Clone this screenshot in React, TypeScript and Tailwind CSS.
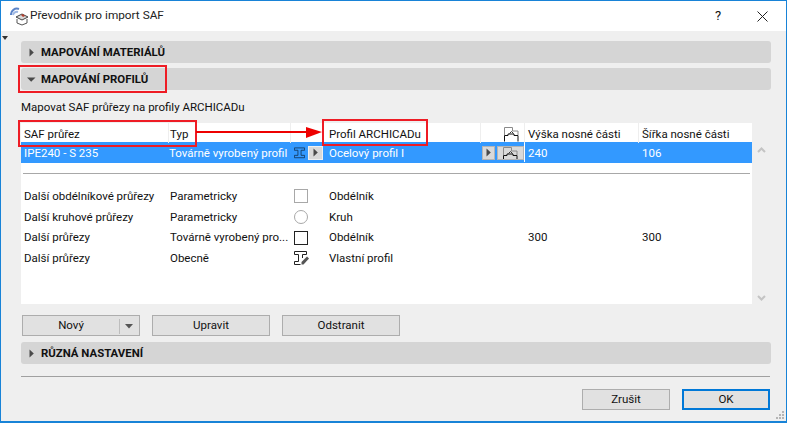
import React from 'react';

const font = { fontFamily: 'Roboto, "Noto Sans", sans-serif' };

const Tri = ({ open = false }: { open?: boolean }) => (
    <svg width="9" height="9" viewBox="0 0 9 9" className="shrink-0">
        {open ? <path d="M0 2.500h8.500L4.200 6.800z" fill="#4a4a4a" /> : <path d="M2.500 0.500L6.800 4.500 2.500 8.500z" fill="#4a4a4a" />}
    </svg>
);

const Section = ({ title, open = false }: { title: string; open?: boolean }) => (
    <div className="h-[22px] rounded-[3px] bg-[#d5d5d5] flex items-center pl-[6px] gap-[5px]">
        <Tri open={open} />
        <span className="pt-[1px] text-[11.4px] font-bold text-[#111]">{title}</span>
    </div>
);

const Btn = ({ label, className }: { label: string; className: string }) => (
    <button className={`h-[21px] pt-[1px] bg-[#e1e1e1] border border-[#adadad] text-[11.5px] text-[#111] flex items-center justify-center ${className}`}>
        {label}
    </button>
);

const ProfileIcon = ({ stroke }: { stroke: string }) => (
    <svg width="14" height="14" viewBox="0 0 14 14" fill="none" stroke={stroke} strokeWidth="1">
        <path d="M.5.5h13v3H9v6.500h4.500v3H.5v-3H5V3.500H.5z" />
    </svg>
);

const LibIcon = ({ clip = false }: { clip?: boolean }) => (
    <svg width="15" height={clip ? 13 : 15} viewBox={clip ? '0 0 15 13' : '0 0 15 15'} fill="none">
        <path d="M.5 8V.5h8v3.500h5.500V8" stroke="#8a8a8a" />
        <path d="M5.500 6.500l2-2 2 2" stroke="#333" />
        <path d="M.5 14.500V8.500h3.500v-1.500h6v1.500h4v6" stroke="#111" />
    </svg>
);

const rowCols = 'grid grid-cols-[147px_122px_33px_157px_44px_114px_114px] items-center';

const rows = [
    { a: 'Další obdélníkové průřezy', b: 'Parametricky', c: 'Obdélník', icon: <div className="w-[14px] h-[14px] border border-[#a8a8a8]" /> },
    { a: 'Další kruhové průřezy', b: 'Parametricky', c: 'Kruh', icon: <div className="w-[14px] h-[14px] border border-[#a8a8a8] rounded-full" /> },
    { a: 'Další průřezy', b: 'Továrně vyrobený pro...', c: 'Obdélník', icon: <div className="w-[14px] h-[14px] border border-[#222]" />, h: '300', w: '300' },
    {
        a: 'Další průřezy',
        b: 'Obecně',
        c: 'Vlastní profil',
        icon: (
            <svg width="16" height="15" viewBox="0 0 16 15" fill="none">
                <path d="M8.500 7V3.500h4v-3H.5v3h4v7h-4v3h6" stroke="#222" />
                <path d="M7.500 13.500V11l5.500-5.500 2 2-5.500 6z" fill="#555" />
            </svg>
        ),
    },
];

export default function App() {
    return (
        <div className="relative w-[787px] h-[423px] overflow-hidden bg-[#efefef] text-[11.5px] text-[#111] border-x-[1px] border-t-[1px] border-b-[2px] border-[#1883d7]" style={font}>
            {/* title bar */}
            <div className="h-[30px] bg-white flex items-center pl-[9px]">
                <svg width="20" height="20" viewBox="0 0 20 20" fill="none">
                    <path d="M1 9a6 6 0 0 1 8-6" stroke="#5b84c8" strokeWidth="2" />
                    <path d="M3 9a4 4 0 0 1 5-3" stroke="#9db7e2" strokeWidth="2" />
                    <path d="M6 11l6-3 6 3-6 3z" fill="#d9d9d9" stroke="#444" />
                    <path d="M7 13v4l5 2 5-2v-4" stroke="#555" />
                    <path d="M11 9l2-1 2 2-2 1z" fill="#b3402f" />
                </svg>
                <span className="text-[11.8px] text-[#222]">Převodník pro import SAF</span>
                <span className="ml-auto text-[13px] text-[#111] w-[20px] text-center mr-[29px]">?</span>
                <svg width="11" height="11" viewBox="0 0 11 11" stroke="#222" className="mr-[18px]">
                    <path d="M.5.5l10 10M10.500.5l-10 10" />
                </svg>
            </div>

            {/* tiny marker in the corner */}
            <svg width="7" height="5" viewBox="0 0 7 5" className="absolute left-[1px] top-[35px]">
                <path d="M0 0h6L3 4z" fill="#333" />
            </svg>

            <div className="pl-[20px] pr-[15px] pt-[10px]">
                <Section title="MAPOVÁNÍ MATERIÁLŮ" />
                <div className="mt-[5px]">
                    <Section title="MAPOVÁNÍ PROFILŮ" open />
                </div>
                <div className="mt-[8px] h-[17px] leading-[18px]">Mapovat SAF průřezy na profily ARCHICADu</div>

                {/* table */}
                <div className="mt-[8px] flex">
                    <div className="w-[731px] h-[181px] bg-white">
                        <div className={`${rowCols} h-[19px]`}>
                            <div className="pl-[3px] pt-[3px] h-full flex items-center">SAF průřez</div>
                            <div className="pl-[1px] pt-[3px] h-full flex items-center border-l border-[#eeeeee]">Typ</div>
                            <div className="h-full border-l border-[#eeeeee]" />
                            <div className="pl-[5px] pt-[3px] h-full flex items-center border-l border-[#eeeeee]">Profil ARCHICADu</div>
                            <div className="h-full flex items-center justify-end pr-[5px] pt-[2px] border-l border-[#eeeeee]">
                                <LibIcon />
                            </div>
                            <div className="pl-[3px] pt-[3px] h-full flex items-center border-l border-[#eeeeee]">Výška nosné části</div>
                            <div className="pl-[3px] pt-[3px] h-full flex items-center border-l border-[#eeeeee]">Šířka nosné části</div>
                        </div>

                        <div className={`${rowCols} h-[21px] bg-[#3399ff] text-white`}>
                            <div className="pl-[3px] pt-[2px]">IPE240 - S 235</div>
                            <div className="pl-[1px] pt-[2px] whitespace-nowrap">Továrně vyrobený profil</div>
                            <div className="flex items-center pl-[4px] gap-[3px]">
                                <ProfileIcon stroke="#10304f" />
                                <div className="w-[15px] h-[14px] shrink-0 bg-[#d9d9d9] border border-[#f0f0f0] flex items-center justify-center">
                                    <Tri />
                                </div>
                            </div>
                            <div className="pl-[6px] pt-[2px]">Ocelový profil I</div>
                            <div className="flex items-center pl-[2px] gap-[2px]">
                                <div className="w-[13px] h-[14px] shrink-0 bg-[#d9d9d9] border border-[#b5b5b5] flex items-center justify-center">
                                    <Tri />
                                </div>
                                <div className="w-[27px] h-[14px] shrink-0 bg-[#d9d9d9] border border-[#b5b5b5] flex justify-center overflow-hidden">
                                    <LibIcon clip />
                                </div>
                            </div>
                            <div className="pl-[3px] pt-[2px] border-l border-white">240</div>
                            <div className="pl-[4px] pt-[2px]">106</div>
                        </div>

                        <div className="mt-[10px] mx-[2px] h-[1px] bg-[#a8a8a8]" />

                        <div className="mt-[12px]">
                            {rows.map((r, i) => (
                                <div key={i} className={`${rowCols} h-[20.8px]`}>
                                    <div className="pl-[3px] whitespace-nowrap">{r.a}</div>
                                    <div className="pl-[2px] whitespace-nowrap">{r.b}</div>
                                    <div className="pl-[4px]">{r.icon}</div>
                                    <div className="pl-[6px]">{r.c}</div>
                                    <div />
                                    <div className="pl-[4px]">{r.h}</div>
                                    <div className="pl-[4px]">{r.w}</div>
                                </div>
                            ))}
                        </div>
                    </div>
                    {/* scroll arrows */}
                    <div className="w-[19px] flex flex-col items-center pt-[24px] pb-[3px] justify-between">
                        <svg width="9" height="6" viewBox="0 0 9 6" fill="none" stroke="#c4c4c4" strokeWidth="2">
                            <path d="M1 5l3.500-3.500L8 5" />
                        </svg>
                        <svg width="9" height="6" viewBox="0 0 9 6" fill="none" stroke="#c4c4c4" strokeWidth="2">
                            <path d="M1 1l3.500 3.500L8 1" />
                        </svg>
                    </div>
                </div>

                {/* buttons */}
                <div className="mt-[11px] ml-[1px] flex gap-[12px]">
                    <button className="w-[118px] h-[21px] pt-[1px] bg-[#e1e1e1] border border-[#adadad] text-[11.5px] flex items-center">
                        <span className="w-[96px] text-center">Nový</span>
                        <span className="w-[1px] h-[15px] bg-[#bdbdbd]" />
                        <svg width="8" height="5" viewBox="0 0 8 5" className="ml-[5px]">
                            <path d="M0 0h8L4 4.500z" fill="#555" />
                        </svg>
                    </button>
                    <Btn label="Upravit" className="w-[118px]" />
                    <Btn label="Odstranit" className="w-[118px]" />
                </div>

                <div className="mt-[6px]">
                    <Section title="RŮZNÁ NASTAVENÍ" />
                </div>
                <div className="mt-[12px] h-[1px] bg-[#a0a0a0] mr-[1px]" />

                <div className="mt-[12px] flex justify-end gap-[12px] pr-[1px]">
                    <Btn label="Zrušit" className="w-[88px]" />
                    <button className="w-[88px] h-[21px] pt-[1px] bg-[#e1e1e1] border-2 border-[#0078d7] text-[11.5px] flex items-center justify-center">OK</button>
                </div>
            </div>

            {/* resize grip */}
            <svg width="9" height="9" viewBox="0 0 9 9" className="absolute right-[1px] bottom-[1px]" fill="#b5b5b5">
                <rect x="6" y="0" width="2" height="2" />
                <rect x="3" y="3" width="2" height="2" />
                <rect x="6" y="3" width="2" height="2" />
                <rect x="0" y="6" width="2" height="2" />
                <rect x="3" y="6" width="2" height="2" />
                <rect x="6" y="6" width="2" height="2" />
            </svg>

            {/* red callouts */}
            <div className="absolute left-[17px] top-[64px] w-[149px] h-[28px] border-2 border-[#ee1c25]" />
            <div className="absolute left-[17px] top-[119px] w-[179px] h-[27px] border-2 border-[#ee1c25]" />
            <div className="absolute left-[321px] top-[118px] w-[106px] h-[27px] border-2 border-[#ee1c25]" />
            <svg width="127" height="14" viewBox="0 0 127 14" className="absolute left-[195px] top-[124px]">
                <path d="M0 7h112" stroke="#ee0000" strokeWidth="2" />
                <path d="M110 2l16 5-16 6z" fill="#ee0000" />
            </svg>
        </div>
    );
}
